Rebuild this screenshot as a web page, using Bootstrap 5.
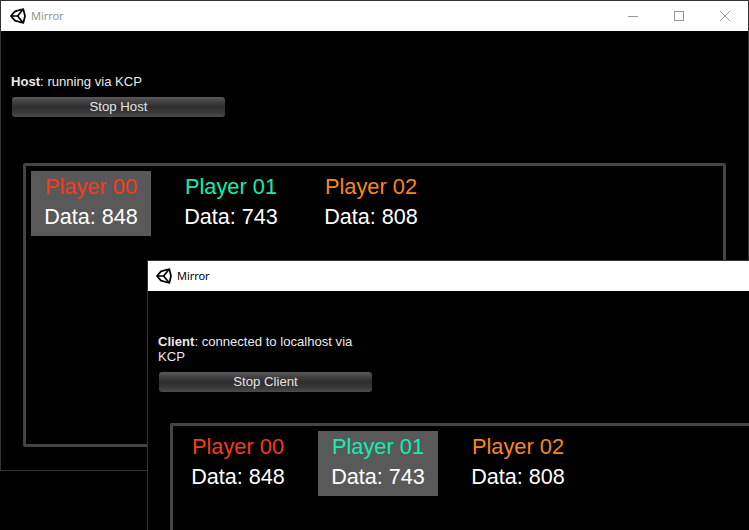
<!DOCTYPE html>
<html lang="en">
<head>
<meta charset="utf-8">
<link href="https://cdn.jsdelivr.net/npm/bootstrap@5.3.0/dist/css/bootstrap.min.css" rel="stylesheet">
<style>
html, body { height: 100%; }
body { background: #000; margin: 0; overflow: hidden; position: relative; font-family: "Liberation Sans", Arial, sans-serif; }
.app-win { position: absolute; background: #000; border: 1px solid #333; }
.win-host { left: 0; top: 0; width: 749px; height: 471px; }
.win-client { left: 147px; top: 260px; right: 0; bottom: 0; border-right: 0; border-bottom: 0; display: flex; flex-direction: column; }
.title-strip { height: 30px; flex: none; background: #fff; font-family: "Noto Sans", sans-serif; font-size: 11px; letter-spacing: -.05px; color: #000; padding-left: 9px; }
.win-host .title-strip { color: #8a9a94; }
.win-client .title-strip { padding-left: 8px; }
.logo-mark { width: 16px; height: 16px; margin-right: 5px; flex: none; }
.ctl-box { width: 46px; height: 30px; }
.head-zone { height: 132px; flex: none; padding: 43px 0 0 11px; }
.status-line { color: #eaeaea; font-size: 13.1px; line-height: 15px; width: 213px; margin: 0 0 8px -1px; white-space: normal; }
.stop-btn { display: block; width: 213px; height: 20px; padding: 0; border: 0; border-radius: 3px; color: #e4e4e4; font-size: 13.2px; line-height: 20px; background: linear-gradient(#5a5a5a 0, #444 20%, #2e2e2e 50%, #383838 75%, #4c4c4c 100%); }
.stop-btn:hover { color: #e4e4e4; }
.player-frame { margin-left: 22px; border: 3px solid #444; border-radius: 2px; padding: 5px; gap: 20px; }
.win-host .player-frame { width: 703px; height: 284px; }
.win-client .player-frame { flex: 1; border-right: 0; border-bottom: 0; border-radius: 2px 0 0 0; }
.player-cell { width: 120px; height: 65px; text-align: center; font-size: 21.6px; line-height: 30px; color: #fff; padding-top: 1px; }
.player-cell.is-local { background: #595959; }
.name-red { color: #f53a1e; font-size: 21.8px; }
.name-green { color: #14ecb0; font-size: 21.8px; }
.name-orange { color: #f8871a; font-size: 21.8px; }
</style>
</head>
<body>

<section class="app-win win-host">
  <div class="title-strip d-flex align-items-center">
    <svg class="logo-mark" viewBox="0 0 16 16"><path d="M.9 8 5 3.4 13.3 1 15 8 13.3 15 5 12.6Z M7.6 8 13.3 1 M7.6 8H.9 M7.6 8 13.3 15" fill="none" stroke="#000" stroke-width="1.7" stroke-linejoin="round"/></svg>
    <span>Mirror</span>
    <div class="ms-auto d-flex">
      <div class="ctl-box d-flex align-items-center justify-content-center"><svg width="10" height="10" viewBox="0 0 10 10"><path d="M0 5.5H10" stroke="#999"/></svg></div>
      <div class="ctl-box d-flex align-items-center justify-content-center"><svg width="10" height="10" viewBox="0 0 10 10"><rect x=".5" y=".5" width="9" height="9" fill="none" stroke="#999"/></svg></div>
      <div class="ctl-box d-flex align-items-center justify-content-center"><svg width="10" height="10" viewBox="0 0 10 10"><path d="M0 0 10 10M10 0 0 10" stroke="#999"/></svg></div>
    </div>
  </div>
  <div class="head-zone">
    <div class="status-line"><b>Host</b>: running via KCP</div>
    <button type="button" class="btn stop-btn">Stop Host</button>
  </div>
  <div class="player-frame d-flex align-items-start">
    <div class="player-cell is-local"><div class="name-red">Player 00</div><div>Data: 848</div></div>
    <div class="player-cell"><div class="name-green">Player 01</div><div>Data: 743</div></div>
    <div class="player-cell"><div class="name-orange">Player 02</div><div>Data: 808</div></div>
  </div>
</section>

<section class="app-win win-client">
  <div class="title-strip d-flex align-items-center">
    <svg class="logo-mark" viewBox="0 0 16 16"><path d="M.9 8 5 3.4 13.3 1 15 8 13.3 15 5 12.6Z M7.6 8 13.3 1 M7.6 8H.9 M7.6 8 13.3 15" fill="none" stroke="#000" stroke-width="1.7" stroke-linejoin="round"/></svg>
    <span>Mirror</span>
  </div>
  <div class="head-zone">
    <div class="status-line"><b>Client</b>: connected to localhost via KCP</div>
    <button type="button" class="btn stop-btn">Stop Client</button>
  </div>
  <div class="player-frame d-flex align-items-start">
    <div class="player-cell"><div class="name-red">Player 00</div><div>Data: 848</div></div>
    <div class="player-cell is-local"><div class="name-green">Player 01</div><div>Data: 743</div></div>
    <div class="player-cell"><div class="name-orange">Player 02</div><div>Data: 808</div></div>
  </div>
</section>

<script src="https://cdn.jsdelivr.net/npm/bootstrap@5.3.0/dist/js/bootstrap.bundle.min.js"></script>
</body>
</html>
